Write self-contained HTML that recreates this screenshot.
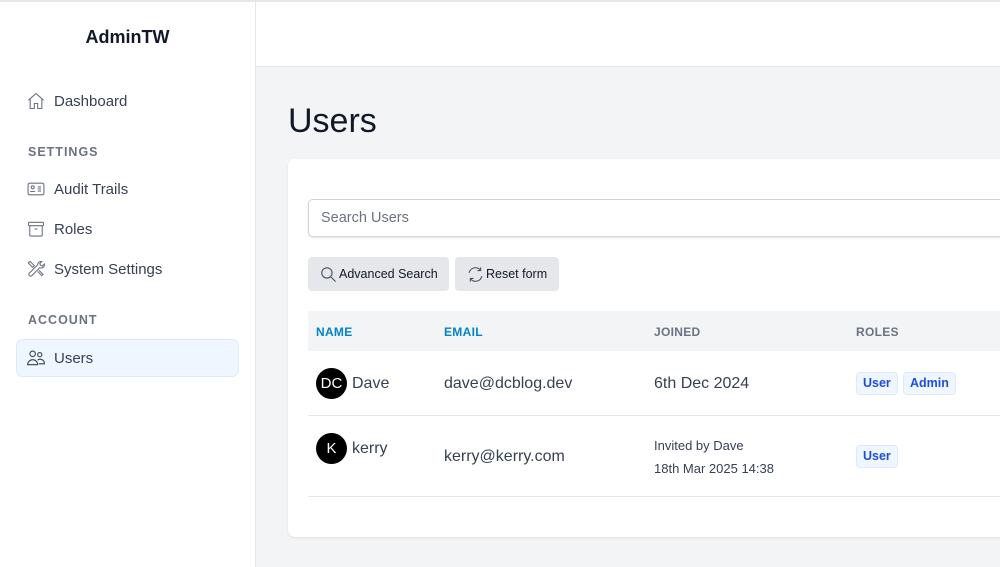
<!DOCTYPE html>
<html><head><style>
*{box-sizing:border-box;margin:0;padding:0}
body{width:1000px;height:567px;overflow:hidden;font-family:"Liberation Sans",sans-serif;background:#f3f4f6;position:relative;color:#1f2937}
.top{position:absolute;left:0;top:0;width:1000px;height:2px;background:#e5e7eb}
.side{position:absolute;left:0;top:2px;width:256px;height:565px;background:#fff;border-right:1px solid #e5e7eb}
.hdr{position:absolute;left:256px;top:2px;width:744px;height:65px;background:#fff;border-bottom:1px solid #e5e7eb}
.logo{position:absolute;left:0;width:255px;top:25px;text-align:center;font-weight:bold;font-size:18px;color:#111827}
.nav{position:absolute;left:26px;font-size:15px;color:#374151;display:flex;align-items:center;gap:8px}
.nav svg{width:20px;height:20px;stroke:#6b7280;fill:none;stroke-width:1.3}
.sec{position:absolute;left:28px;font-size:12.5px;font-weight:bold;letter-spacing:1px;color:#6b7280}
.active{position:absolute;left:16px;top:339px;width:223px;height:38px;background:#eff6ff;border:1px solid #dbeafe;border-radius:7px}
h1{position:absolute;left:288px;top:102px;font-size:34px;font-weight:normal;color:#111827}
.card{position:absolute;left:288px;top:159px;width:730px;height:378px;background:#fff;border-radius:7px;box-shadow:0 1px 2px rgba(0,0,0,.08)}
.search{position:absolute;left:308px;top:199px;width:710px;height:38px;border:1px solid #d1d5db;border-radius:5px;box-shadow:0 1px 2px rgba(0,0,0,.1);font-size:14.5px;color:#6b7280;padding:10px 12px}
.btn{position:absolute;top:257px;height:34px;background:#e5e7eb;border-radius:4px;font-size:12.5px;color:#111827;display:flex;align-items:center;padding-left:11px;gap:1px}
.btn svg{width:19px;height:19px;fill:none;stroke:#4b5563;stroke-width:1.4}
.th{position:absolute;left:308px;top:311px;width:700px;height:40px;background:#f3f4f6}
.thc{position:absolute;top:325px;font-size:12px;font-weight:bold;letter-spacing:.3px}
.line{position:absolute;left:308px;width:700px;height:1px;background:#e5e7eb}
.av{position:absolute;left:316px;width:31px;height:31px;border-radius:50%;background:#000;color:#fff;font-size:15px;text-align:center;line-height:31px}
.t{position:absolute;font-size:16px;color:#374151}
.badge{position:absolute;height:23px;background:#eff6ff;border:1px solid #dbeafe;border-radius:4px;color:#1d4ed8;font-size:12.5px;font-weight:bold;line-height:21px;padding:0 6px}
</style></head><body>
<div class="top"></div>
<div class="side">
<div class="logo">AdminTW</div>
</div>
<div class="hdr"></div>
<div class="nav" style="top:91px"><svg viewBox="0 0 24 24"><path d="M3 11 12 3l9 8M5 9.5V21h5v-6h4v6h5V9.5"/></svg>Dashboard</div>
<div class="sec" style="top:145px">SETTINGS</div>
<div class="nav" style="top:179px"><svg viewBox="0 0 24 24"><rect x="2.5" y="5" width="19" height="14" rx="2"/><circle cx="8" cy="10" r="1.8"/><path d="M5 15h6M14 9.5h4M14 12h4M14 14.5h4"/></svg>Audit Trails</div>
<div class="nav" style="top:219px"><svg viewBox="0 0 24 24"><rect x="3" y="4" width="18" height="4" rx="1"/><path d="M4.5 8v11a1.5 1.5 0 0 0 1.5 1.5h12a1.5 1.5 0 0 0 1.5-1.5V8M10 12h4"/></svg>Roles</div>
<div class="nav" style="top:259px"><svg viewBox="0 0 24 24"><path d="M14 7a4 4 0 0 1 5-4l-2.5 2.5 1 2 2 1L22 6a4 4 0 0 1-5.5 4.5L7 20a1.8 1.8 0 0 1-3-3l9.5-9.5A4 4 0 0 1 14 7zM3 4l2-1 5 5-2 2-5-5zM14 15l5 5 1.5-1.5-5-5"/></svg>System Settings</div>
<div class="sec" style="top:313px">ACCOUNT</div>
<div class="active"></div>
<div class="nav" style="top:348px"><svg viewBox="0 0 24 24" style="stroke:#374151"><circle cx="8" cy="7" r="3.3"/><circle cx="16.5" cy="8" r="2.5"/><path d="M2 20a6 6 0 0 1 12 0zM14 14.5a5 5 0 0 1 8 4.5h-6.5"/></svg>Users</div>
<h1>Users</h1>
<div class="card"></div>
<div class="search">Search Users</div>
<div class="btn" style="left:308px;width:141px"><svg viewBox="0 0 24 24"><circle cx="10" cy="10" r="6.5"/><path d="M15 15l6 6"/></svg>Advanced Search</div>
<div class="btn" style="left:455px;width:104px"><svg viewBox="0 0 24 24"><path d="M4 10a8 8 0 0 1 14.5-3M20 14a8 8 0 0 1-14.5 3M18.5 3v4h-4M5.5 21v-4h4"/></svg>Reset form</div>
<div class="th"></div>
<div class="thc" style="left:316px;color:#0284c7">NAME</div>
<div class="thc" style="left:444px;color:#0284c7">EMAIL</div>
<div class="thc" style="left:654px;color:#6b7280">JOINED</div>
<div class="thc" style="left:856px;color:#6b7280">ROLES</div>
<div class="av" style="top:368px">DC</div>
<div class="t" style="left:352px;top:375px">Dave</div>
<div class="t" style="left:444px;top:375px">dave@dcblog.dev</div>
<div class="t" style="left:654px;top:375px">6th Dec 2024</div>
<div class="badge" style="left:856px;top:372px">User</div>
<div class="badge" style="left:903px;top:372px">Admin</div>
<div class="line" style="top:415px"></div>
<div class="av" style="top:433px">K</div>
<div class="t" style="left:352px;top:440px">kerry</div>
<div class="t" style="left:444px;top:448px">kerry@kerry.com</div>
<div class="t" style="left:654px;top:438px;font-size:13px">Invited by Dave</div>
<div class="t" style="left:654px;top:461px;font-size:13px">18th Mar 2025 14:38</div>
<div class="badge" style="left:856px;top:445px">User</div>
<div class="line" style="top:496px"></div>
</body></html>
